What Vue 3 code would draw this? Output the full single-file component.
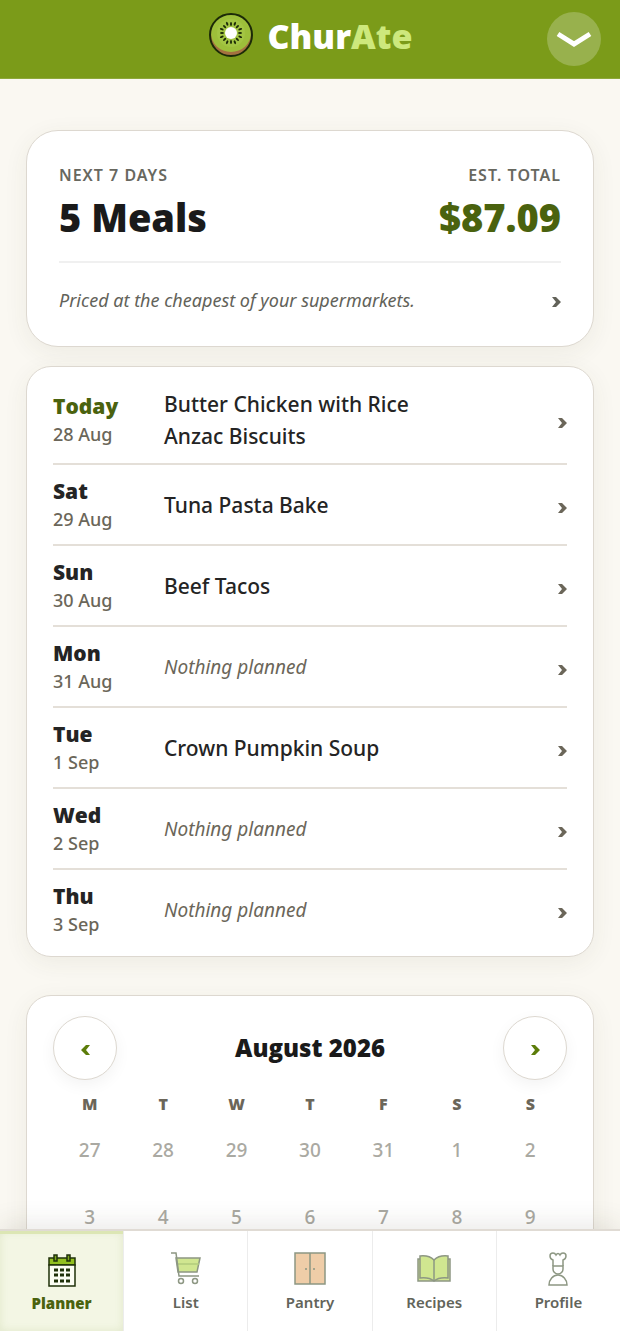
<template>
  <div class="app">
    <header class="topbar">
      <a href="#" class="brand">
        <svg class="kiwi" viewBox="0 0 46 46" aria-hidden="true">
          <circle cx="23" cy="23" r="21" fill="#a4713f" />
          <ellipse cx="23" cy="21" rx="20" ry="19" fill="#9dbf3a" />
          <circle cx="23" cy="21" r="14" fill="#a3c543" />
          <circle cx="23" cy="23" r="21" fill="none" stroke="#1c2a08" stroke-width="2" />
          <ellipse
            v-for="n in 16"
            :key="n"
            cx="23"
            :cy="n % 2 ? 11 : 12"
            rx="1"
            ry="2"
            fill="#1c2a08"
            :transform="`rotate(${n * 22.5} 23 21)`"
          />
          <circle cx="23" cy="21" r="6" fill="#fff" />
        </svg>
        <span class="wordmark">Chur<span class="accent">Ate</span></span>
      </a>
      <button type="button" class="menu-button" aria-label="Menu">
        <svg viewBox="0 0 36 18" aria-hidden="true">
          <path d="M2 4 18 14 34 4" fill="none" stroke="#fff" stroke-width="5" />
        </svg>
      </button>
    </header>

    <main class="content">
      <section class="card summary">
        <div class="totals">
          <div>
            <p class="label">Next 7 days</p>
            <p class="figure">5 Meals</p>
          </div>
          <div class="right">
            <p class="label">Est. total</p>
            <p class="figure price">$87.09</p>
          </div>
        </div>
        <a href="#" class="note">
          <span>Priced at the cheapest of your supermarkets.</span>
          <svg class="chevron" viewBox="0 0 9 10" aria-hidden="true"><path d="M0 0h4l5 5-5 5H0l4-5z" /></svg>
        </a>
      </section>

      <section class="card days">
        <a v-for="day in days" :key="day.date" href="#" class="day">
          <span class="when">
            <span class="name" :class="{ today: day.name === 'Today' }">{{ day.name }}</span>
            <span class="date">{{ day.date }}</span>
          </span>
          <span class="meals">
            <span v-for="meal in day.meals" :key="meal">{{ meal }}</span>
            <em v-if="!day.meals.length">Nothing planned</em>
          </span>
          <svg class="chevron" viewBox="0 0 9 10" aria-hidden="true"><path d="M0 0h4l5 5-5 5H0l4-5z" /></svg>
        </a>
      </section>

      <section class="card calendar">
        <div class="month">
          <button type="button" class="round" aria-label="Previous month">
            <svg class="chevron" viewBox="0 0 9 10" aria-hidden="true"><path d="M9 0H5L0 5l5 5h4L5 5z" /></svg>
          </button>
          <h2>August 2026</h2>
          <button type="button" class="round" aria-label="Next month">
            <svg class="chevron" viewBox="0 0 9 10" aria-hidden="true"><path d="M0 0h4l5 5-5 5H0l4-5z" /></svg>
          </button>
        </div>
        <table>
          <thead>
            <tr>
              <th v-for="(d, i) in weekdays" :key="i" scope="col">{{ d }}</th>
            </tr>
          </thead>
          <tbody>
            <tr v-for="(week, i) in weeks" :key="i">
              <td v-for="d in week" :key="d">{{ d }}</td>
            </tr>
          </tbody>
        </table>
      </section>
    </main>

    <nav class="tabs">
      <a href="#" class="tab active" aria-current="page">
        <svg viewBox="0 0 36 36" fill="none" stroke="#1f3109" stroke-width="1.5" aria-hidden="true">
          <path d="M5 6h26v7H5z" fill="#92c020" />
          <path d="M5 13h26v21H5z" fill="#fbfdf3" />
          <path d="M10 3h3v6h-3zM23 3h3v6h-3z" fill="#7ba51c" />
          <path d="M10 18h4m2 0h4m2 0h4M10 23h4m2 0h4m2 0h4M10 29h4m2 0h4m2 0h4" stroke-width="3" />
        </svg>
        <span>Planner</span>
      </a>
      <a href="#" class="tab">
        <svg viewBox="0 0 36 36" fill="none" stroke="#8d9783" stroke-width="1.5" aria-hidden="true">
          <path d="M8 7h24l-3 14H10z" fill="#d0e690" />
          <path d="M9 13h22" stroke="#b2cb7c" />
          <path d="M3 2h5l3 23h20" />
          <circle cx="13" cy="30" r="2.5" />
          <circle cx="27" cy="30" r="2.5" />
        </svg>
        <span>List</span>
      </a>
      <a href="#" class="tab">
        <svg viewBox="0 0 36 36" fill="none" stroke="#8d9783" stroke-width="1.5" aria-hidden="true">
          <path d="M3 2h30v31H3z" fill="#efcda8" />
          <path d="M18 2v31" />
          <path d="M14 17v2M22 17v2" />
        </svg>
        <span>Pantry</span>
      </a>
      <a href="#" class="tab">
        <svg viewBox="0 0 36 36" fill="none" stroke="#8d9783" stroke-width="1.5" aria-hidden="true">
          <path d="M4 8H2v22h32V8h-2" fill="#d0e690" />
          <path d="M4 5q9-1 14 4 5-5 14-4v22q-9-1-14 3-5-4-14-3z" fill="#d0e690" />
          <path d="M18 9v21" />
        </svg>
        <span>Recipes</span>
      </a>
      <a href="#" class="tab">
        <svg viewBox="0 0 36 36" fill="none" stroke="#8d9783" stroke-width="1.5" aria-hidden="true">
          <path d="M13 15V9q-3-1-3-4 0-3 3-3 2 0 3 2 2-3 4 0 1-2 3-2 3 0 3 3t-3 4v6" />
          <path d="M13 15h10v3a5 5 0 0 1-10 0z" />
          <path d="M9 34a9 10 0 0 1 18 0z" />
        </svg>
        <span>Profile</span>
      </a>
    </nav>
  </div>
</template>

<script setup>
const days = [
  { name: 'Today', date: '28 Aug', meals: ['Butter Chicken with Rice', 'Anzac Biscuits'] },
  { name: 'Sat', date: '29 Aug', meals: ['Tuna Pasta Bake'] },
  { name: 'Sun', date: '30 Aug', meals: ['Beef Tacos'] },
  { name: 'Mon', date: '31 Aug', meals: [] },
  { name: 'Tue', date: '1 Sep', meals: ['Crown Pumpkin Soup'] },
  { name: 'Wed', date: '2 Sep', meals: [] },
  { name: 'Thu', date: '3 Sep', meals: [] }
]

const weekdays = ['M', 'T', 'W', 'T', 'F', 'S', 'S']

const weeks = [
  [27, 28, 29, 30, 31, 1, 2],
  [3, 4, 5, 6, 7, 8, 9]
]
</script>

<style>
body {
  margin: 0;
  background: #faf8f2;
}
</style>

<style scoped>
.app {
  display: flex;
  flex-direction: column;
  height: 100vh;
  background: #faf8f2;
  color: #242424;
  font-family: 'Noto Sans', 'Open Sans', sans-serif;
}

.wordmark, .figure, .name, h2, th, .tab.active {
  font-family: 'Open Sans', 'Noto Sans', sans-serif;
  font-weight: 800;
}

a {
  color: inherit;
  text-decoration: none;
}

button {
  padding: 0;
  cursor: pointer;
}

p, h2 {
  margin: 0;
}

.topbar {
  display: grid;
  grid-template-columns: 1fr auto 1fr;
  align-items: center;
  flex: none;
  height: 78px;
  padding: 0 19px;
  background: #7b9b19;
  border-bottom: 1px solid #8ea83a;
}

.brand {
  grid-column: 2;
  display: flex;
  align-items: center;
  gap: 14px;
  padding-bottom: 8px;
}

.kiwi {
  width: 46px;
  height: 46px;
}

.wordmark {
  font-size: 34px;
  line-height: 46px;
  padding-top: 2px;
  color: #fff;
}

.accent {
  color: #cde87c;
}

.menu-button {
  justify-self: end;
  display: grid;
  place-items: center;
  width: 54px;
  height: 54px;
  border: none;
  border-radius: 50%;
  background: #98b14d;
}

.menu-button svg {
  width: 36px;
  height: 18px;
}

.content {
  flex: 1;
  min-height: 0;
  overflow: hidden;
  padding: 51px 26px 0;
}

.card {
  background: #fff;
  border: 1px solid #ddd8d0;
  border-radius: 25px;
  box-shadow: 0 6px 24px rgba(70, 70, 40, 0.07);
}

.summary {
  border-radius: 32px;
  padding: 32px;
}

.totals {
  display: flex;
  justify-content: space-between;
  padding-bottom: 16px;
  border-bottom: 2px solid #f0f0f0;
}

.right {
  text-align: right;
}

.label {
  font-size: 16px;
  line-height: 24px;
  font-weight: 600;
  letter-spacing: 1px;
  text-transform: uppercase;
  color: #68685f;
}

.figure {
  font-size: 38px;
  line-height: 56px;
  padding-top: 2px;
  color: #1a1a1a;
}

.price {
  color: #4a620e;
}

.note {
  display: flex;
  align-items: center;
  justify-content: space-between;
  padding-top: 23px;
  font-size: 18px;
  line-height: 28px;
  font-style: italic;
  color: #626259;
}

.chevron {
  flex: none;
  width: 9px;
  height: 10px;
  margin-top: 4px;
  fill: currentColor;
}

.days {
  margin-top: 19px;
  padding: 9px 26px 7px;
}

.day {
  display: flex;
  align-items: center;
  padding: 12px 0 11px;
  border-bottom: 2px solid #e4dfd8;
  color: #6b6659;
}

.day:last-child {
  border-bottom: none;
}

.day .chevron {
  margin-top: 6px;
}

.when {
  display: flex;
  flex-direction: column;
  flex: none;
  width: 111px;
}

.name {
  font-size: 21px;
  line-height: 28px;
  color: #242424;
}

.name.today {
  color: #4a620e;
}

.date {
  font-size: 18px;
  line-height: 28px;
  font-weight: 500;
}

.meals {
  display: flex;
  flex-direction: column;
  flex: 1;
  font-size: 21px;
  line-height: 32px;
  font-weight: 500;
  color: #242424;
}

.meals em {
  font-size: 19px;
  font-weight: 400;
  color: #6b6659;
}

.calendar {
  margin-top: 38px;
  padding: 20px 26px;
}

.month {
  display: flex;
  align-items: center;
  justify-content: space-between;
}

.round {
  display: grid;
  place-items: center;
  width: 64px;
  height: 64px;
  border: 1px solid #ddd8d0;
  border-radius: 50%;
  background: #fff;
  color: #5c7d0a;
  box-shadow: 0 5px 16px rgba(0, 0, 0, 0.05);
}

h2 {
  font-size: 24px;
  line-height: 32px;
  color: #1a1a1a;
}

table {
  width: 100%;
  table-layout: fixed;
  border-collapse: collapse;
}

th {
  height: 48px;
  padding: 0;
  font-size: 16px;
  color: #6b6659;
}

td {
  height: 43px;
  padding: 0 0 24px;
  font-size: 19px;
  line-height: 20px;
  font-weight: 500;
  text-align: center;
  vertical-align: middle;
  color: #aaa9a2;
}

.tabs {
  position: relative;
  display: flex;
  flex: none;
  padding-bottom: 10px;
  background: #fff;
  border-top: 2px solid #e0dbd4;
  box-shadow: 0 -6px 24px rgba(60, 50, 30, 0.1);
}

.tab {
  display: flex;
  flex-direction: column;
  align-items: center;
  flex: 1;
  box-sizing: border-box;
  height: 100px;
  padding-top: 20px;
  border-right: 1px solid #ececec;
  font-size: 15px;
  line-height: 30px;
  font-weight: 600;
  color: #62645a;
}

.tab:last-child {
  border-right: none;
}

.tab svg {
  width: 36px;
  height: 36px;
}

.tab.active {
  padding-top: 21px;
  background: #f3f6e4;
  box-shadow: inset 0 3px 0 #dce6b4, inset 0 0 8px rgba(100, 130, 20, 0.12);
  color: #4a620e;
}
</style>
